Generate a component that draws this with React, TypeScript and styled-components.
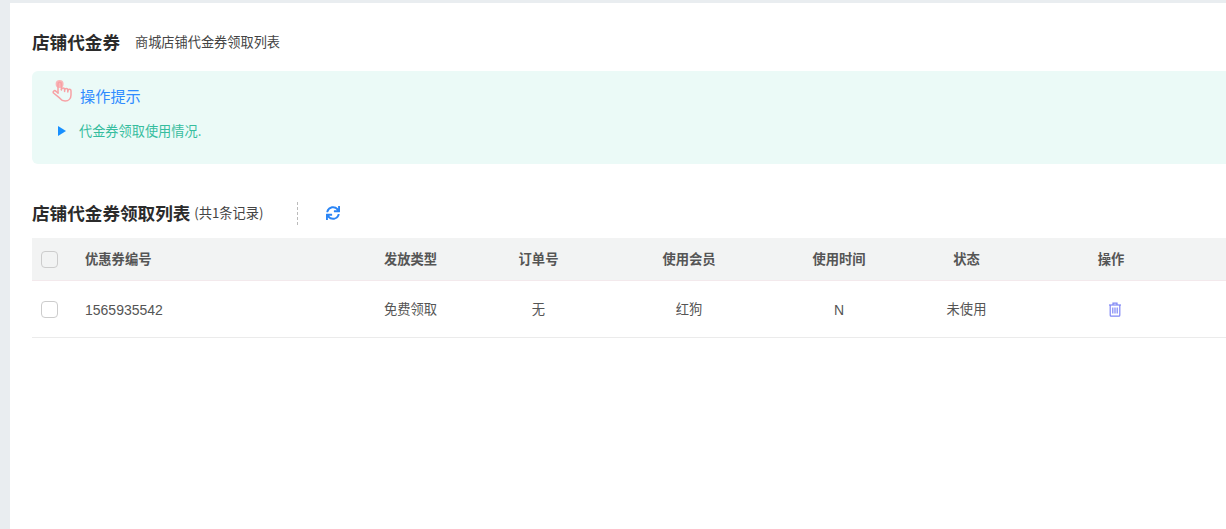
import React from "react";
import styled, { createGlobalStyle } from "styled-components";
import { FaSync } from "react-icons/fa";

const GlobalStyle = createGlobalStyle`
  html, body {
    margin: 0;
    padding: 0;
    background: #e9edf0;
    overflow: hidden;
  }
  body {
    font-family: "Noto Sans CJK SC", "Liberation Sans", sans-serif;
  }
`;

const Page = styled.div`
  height: 529px;
  box-sizing: border-box;
  padding: 3px 0 0 10px;
`;

const Panel = styled.div`
  height: 100%;
  box-sizing: border-box;
  background: #fff;
  padding: 0 0 0 22px;
`;

const PageHeader = styled.div`
  display: flex;
  align-items: center;
  height: 68px;
  padding-top: 9px;
  box-sizing: border-box;
  gap: 15px;
`;

const PageTitle = styled.h1`
  margin: 0;
  font-size: 17.6px;
  font-weight: 700;
  line-height: 24px;
  color: #2b2b2b;
`;

const PageSubtitle = styled.span`
  font-size: 13.2px;
  line-height: 20px;
  color: #444;
`;

const TipBox = styled.div`
  height: 93px;
  box-sizing: border-box;
  background: #ebfaf7;
  border-radius: 6px 0 0 6px;
  padding: 9px 0 0 20px;
`;

const TipHead = styled.div`
  display: flex;
  align-items: flex-start;
  gap: 8px;
  height: 33px;
`;

const TipTitle = styled.span`
  font-size: 15.2px;
  line-height: 20px;
  margin-top: 5px;
  color: #2f8cff;
`;

const TipLine = styled.div`
  display: flex;
  align-items: center;
  margin-top: 8px;
  padding-left: 6px;
  gap: 13px;
  font-size: 13.2px;
  line-height: 20px;
  color: #36bd9e;
`;

const Triangle = styled.i`
  display: block;
  width: 0;
  height: 0;
  border-left: 8px solid #1890ff;
  border-top: 5px solid transparent;
  border-bottom: 5px solid transparent;
`;

const ListBar = styled.div`
  display: flex;
  align-items: center;
  height: 74px;
  padding-top: 24px;
  box-sizing: border-box;
`;

const ListTitle = styled.h2`
  margin: 0;
  font-size: 17.6px;
  font-weight: 700;
  line-height: 24px;
  color: #2b2b2b;
`;

const ListCount = styled.span`
  margin-left: 4px;
  font-size: 13.2px;
  line-height: 20px;
  color: #444;
`;

const Divider = styled.span`
  width: 0;
  height: 23px;
  margin-left: 34px;
  border-left: 1px dashed #bbb;
`;

const RefreshButton = styled.button`
  display: flex;
  padding: 0;
  margin-left: 28px;
  border: 0;
  background: none;
  color: #2b85f5;
  font-size: 14px;
`;

const Row = styled.div<{ $head?: boolean }>`
  display: grid;
  grid-template-columns: 53px 273px 105px 151px 150px 150px 105px 184px;
  align-items: center;
  height: ${(p) => (p.$head ? "43px" : "57px")};
  box-sizing: border-box;
  border-bottom: 1px solid ${(p) => (p.$head ? "#f3e9ec" : "#ebebeb")};
  background: ${(p) => (p.$head ? "#f2f3f3" : "#fff")};
  font-family: "Liberation Sans", "Noto Sans CJK SC", sans-serif;
  font-size: 13.3px;
  font-weight: ${(p) => (p.$head ? 700 : 400)};
  color: #555;
`;

const Cell = styled.div<{ $left?: boolean; $latin?: boolean }>`
  text-align: ${(p) => (p.$left ? "left" : "center")};
  font-size: ${(p) => (p.$latin ? "14px" : "inherit")};
  line-height: 20px;
  padding-top: 2px;
`;

const Check = styled.span`
  display: block;
  width: 17px;
  height: 17px;
  margin-left: 9px;
  box-sizing: border-box;
  border: 1px solid #ccc;
  border-radius: 4px;
`;

const DeleteCell = styled(Cell)`
  display: flex;
  justify-content: center;
  padding: 0 0 0 8px;
`;

const HandIcon = () => (
  <svg width="20" height="23" viewBox="0 0 20 23" fill="none" stroke="#f7a1a5" strokeWidth="1.5" strokeLinecap="round" strokeLinejoin="round">
    <circle cx="7.6" cy="4" r="4" fill="#f9b6b8" stroke="none" />
    <path d="M6 13V4a1.7 1.7 0 0 1 3.4 0v6" />
    <path d="M9.4 9.5a1.6 1.6 0 0 1 3.2 0v2" />
    <path d="M12.6 10a1.6 1.6 0 0 1 3.2 0v2" />
    <path d="M15.8 10.8a1.6 1.6 0 0 1 3.2 0v4.2c0 3.6-2.4 6-5.8 6-2.6 0-4-1-5.4-2.8L1.5 13a1.5 1.5 0 0 1 2.3-1.9L6 13" />
  </svg>
);

const TrashIcon = () => (
  <svg width="14" height="15" viewBox="0 0 14 15" fill="none" stroke="#7f86f5" strokeWidth="1.2">
    <path d="M1 3h12" />
    <path d="M5 3V1.2h4V3" />
    <path d="M2.2 3v10.2c0 .5.4.9.9.9h7.8c.5 0 .9-.4.9-.9V3" />
    <path d="M4.8 5.5v6M7 5.5v6M9.2 5.5v6" />
  </svg>
);

const columns = ["发放类型", "订单号", "使用会员", "使用时间", "状态", "操作"];
const record = ["免费领取", "无", "红狗", "N", "未使用"];

const App: React.FC = () => {
  return (
    <Page>
      <GlobalStyle />
      <Panel>
        <PageHeader>
          <PageTitle>店铺代金券</PageTitle>
          <PageSubtitle>商城店铺代金券领取列表</PageSubtitle>
        </PageHeader>
        <TipBox>
          <TipHead>
            <HandIcon />
            <TipTitle>操作提示</TipTitle>
          </TipHead>
          <TipLine>
            <Triangle />
            代金券领取使用情况.
          </TipLine>
        </TipBox>
        <ListBar>
          <ListTitle>店铺代金券领取列表</ListTitle>
          <ListCount>(共1条记录)</ListCount>
          <Divider />
          <RefreshButton>
            <FaSync />
          </RefreshButton>
        </ListBar>
        <Row $head>
          <Check />
          <Cell $left>优惠券编号</Cell>
          {columns.map((name) => (
            <Cell key={name}>{name}</Cell>
          ))}
        </Row>
        <Row>
          <Check />
          <Cell $left $latin>1565935542</Cell>
          {record.map((value) => (
            <Cell key={value} $latin={value === "N"}>{value}</Cell>
          ))}
          <DeleteCell>
            <TrashIcon />
          </DeleteCell>
        </Row>
      </Panel>
    </Page>
  );
};

export default App;
